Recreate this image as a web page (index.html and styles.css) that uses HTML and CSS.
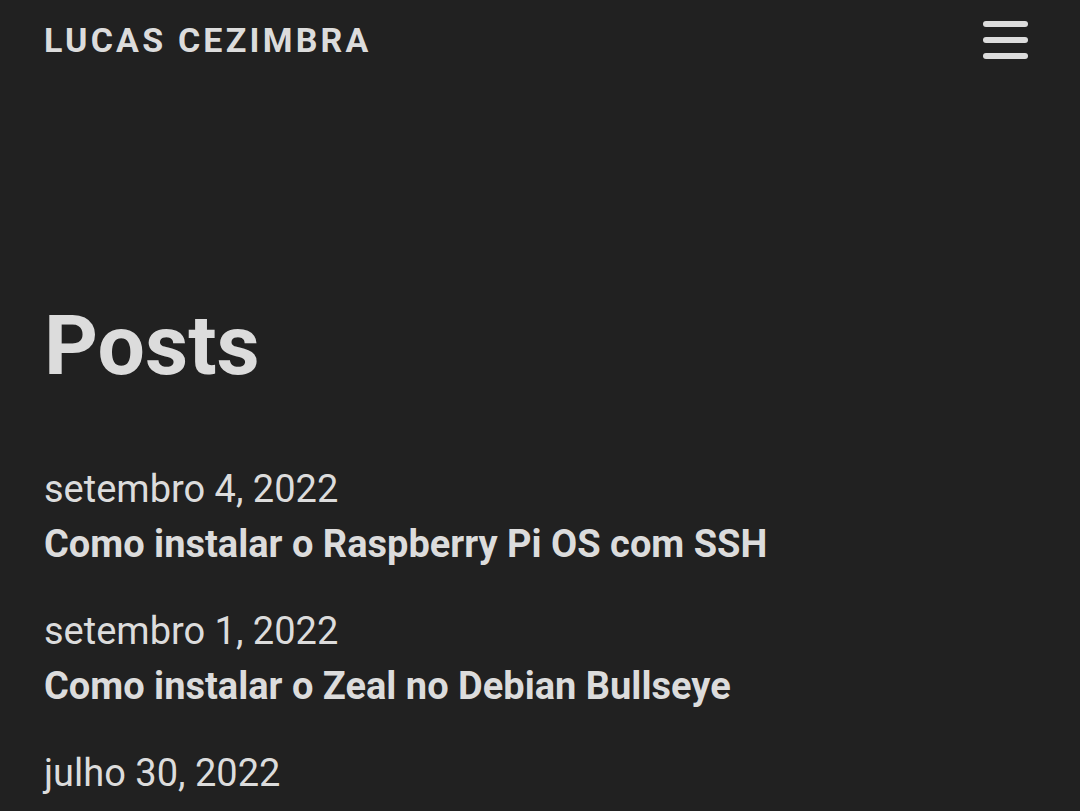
FILE: index.html
```html
<!DOCTYPE html>
<html lang="pt">
<head>
<meta charset="utf-8">
<title>Lucas Cezimbra</title>
<link rel="stylesheet" href="styles.css">
</head>
<body>
<header class="site-header">
  <a class="brand" href="#">LUCAS CEZIMBRA</a>
  <button class="menu-btn" aria-label="Menu">
    <span class="bar"></span>
    <span class="bar"></span>
    <span class="bar"></span>
  </button>
</header>
<main class="content">
  <h1 class="page-title">Posts</h1>
  <ul class="post-list">
    <li class="post">
      <div class="post-date">setembro 4, 2022</div>
      <a class="post-title" href="#">Como instalar o Raspberry Pi OS com SSH</a>
    </li>
    <li class="post">
      <div class="post-date">setembro 1, 2022</div>
      <a class="post-title" href="#">Como instalar o Zeal no Debian Bullseye</a>
    </li>
    <li class="post">
      <div class="post-date">julho 30, 2022</div>
    </li>
  </ul>
</main>
</body>
</html>
```
FILE: styles.css
```css
html, body {
  margin: 0;
  padding: 0;
  background: #212121;
  color: #dcdcdc;
  font-family: Roboto, "Liberation Sans", sans-serif;
  overflow: hidden;
  height: 811px;
}

.site-header {
  display: flex;
  justify-content: space-between;
  align-items: center;
  padding: 16px 52px 0 44px;
  height: 48px;
}

.brand {
  color: #dcdcdc;
  text-decoration: none;
  font-size: 34px;
  font-weight: 700;
  letter-spacing: 3.2px;
  line-height: 48px;
}

.menu-btn {
  background: none;
  border: 0;
  padding: 0;
  display: flex;
  flex-direction: column;
  gap: 10px;
  width: 45px;
}

.bar {
  display: block;
  height: 6px;
  width: 45px;
  border-radius: 3px;
  background: #dcdcdc;
}

.content {
  padding: 0 44px;
}

.page-title {
  margin: 232px 0 0;
  font-size: 84px;
  font-weight: 700;
  line-height: 100px;
}

.post-list {
  list-style: none;
  margin: 66px 0 0;
  padding: 0;
}

.post {
  margin-bottom: 32px;
}

.post-date {
  font-size: 38px;
  font-weight: 400;
  line-height: 55px;
}

.post-title {
  display: block;
  color: #dcdcdc;
  text-decoration: none;
  font-size: 38px;
  font-weight: 700;
  line-height: 55px;
}
```
